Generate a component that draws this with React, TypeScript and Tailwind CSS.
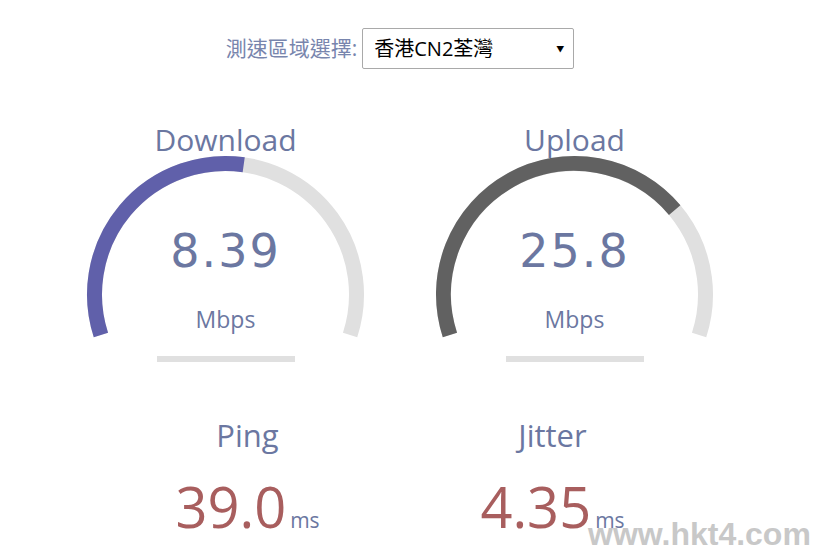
const FONT = "font-['Open_Sans','Noto_Sans_CJK_TC',sans-serif]";

type GaugeProps = {
  title: string;
  value: string;
  unit: string;
  amount: number;
  color: string;
};

const CX = 174.5;
const CY = 174.5;
const R = 131;

function arcPath(from: number, to: number) {
  const x1 = CX + R * Math.cos(from);
  const y1 = CY + R * Math.sin(from);
  const x2 = CX + R * Math.cos(to);
  const y2 = CY + R * Math.sin(to);
  const large = to - from > Math.PI ? 1 : 0;
  return `M ${x1} ${y1} A ${R} ${R} 0 ${large} 1 ${x2} ${y2}`;
}

function Gauge({ title, value, unit, amount, color }: GaugeProps) {
  const start = -Math.PI * 1.1;
  const end = Math.PI * 0.1;
  const fillEnd = start + amount * Math.PI * 1.2;
  return (
    <div className="relative w-[349px] h-[250px] flex flex-col items-center text-[#6b77a1]">
      <svg className="absolute inset-0" width="349" height="250" viewBox="0 0 349 250">
        <path d={arcPath(start, end)} fill="none" stroke="#e0e0e0" strokeWidth="15" />
        <path d={arcPath(start, fillEnd)} fill="none" stroke={color} strokeWidth="15" />
      </svg>
      <div className="relative mt-[5px] text-[30px] leading-[30px]">{title}</div>
      <div className="relative mt-[73px] text-[46px] leading-[46px] tracking-[2px] font-['DejaVu_Sans',sans-serif]">
        {value}
      </div>
      <div className="relative mt-[34px] text-[23px] leading-[23px]">{unit}</div>
      <div className="mt-[25px] w-[138px] h-[6px] bg-[#e0e0e0]" />
    </div>
  );
}

function Stat({ title, value }: { title: string; value: string }) {
  return (
    <div className="w-[305px] flex flex-col items-center">
      <div className="text-[31px] leading-[31px] text-[#6b77a1]">{title}</div>
      <div className="mt-[27px] flex items-baseline">
        <span className="text-[56px] leading-[56px] text-[#a85e5e]">{value}</span>
        <span className="ml-[4px] text-[21px] leading-[21px] text-[#6b77a1]">ms</span>
      </div>
    </div>
  );
}

export default function App() {
  return (
    <div className={`relative w-[825px] h-[554px] overflow-hidden bg-white ${FONT}`}>
      <div className="w-[800px] flex flex-col items-center">
        {/* Server select */}
        <div className="mt-[28px] flex items-center gap-[5px]">
          <span className="text-[21px] text-[#7885ad]">測速區域選擇:</span>
          <div className="w-[212px] h-[41px] border border-[#a9a9a9] rounded-[2px] flex items-center justify-between pl-[11px] pr-[9px] text-black">
            <span className="text-[20px]">香港CN2荃灣</span>
            <span className="text-[8px]">▼</span>
          </div>
        </div>

        {/* Gauges */}
        <div className="mt-[51px] flex">
          <Gauge title="Download" value="8.39" unit="Mbps" amount={0.537} color="#6060aa" />
          <Gauge title="Upload" value="25.8" unit="Mbps" amount={0.731} color="#616161" />
        </div>

        {/* Ping / Jitter */}
        <div className="mt-[50px] flex">
          <Stat title="Ping" value="39.0" />
          <Stat title="Jitter" value="4.35" />
        </div>
      </div>

      <div className="absolute left-[588px] top-[518px] text-[32px] leading-[32px] font-bold text-[#c8c8c8] font-['Liberation_Sans',sans-serif]">
        www.hkt4.com
      </div>
    </div>
  );
}
